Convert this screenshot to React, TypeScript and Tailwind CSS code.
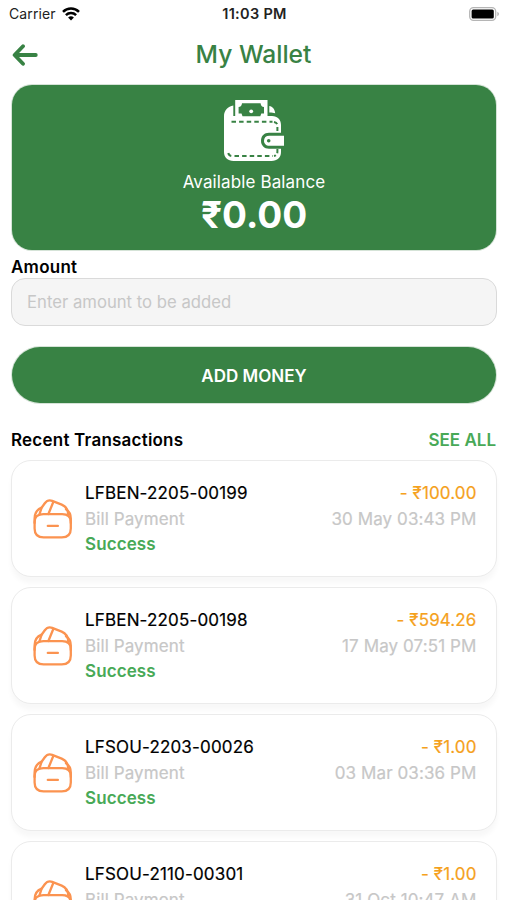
type Transaction = {
  id: string;
  amount: string;
  date: string;
};

const transactions: Transaction[] = [
  { id: "LFBEN-2205-00199", amount: "- ₹100.00", date: "30 May 03:43 PM" },
  { id: "LFBEN-2205-00198", amount: "- ₹594.26", date: "17 May 07:51 PM" },
  { id: "LFSOU-2203-00026", amount: "- ₹1.00", date: "03 Mar 03:36 PM" },
  { id: "LFSOU-2110-00301", amount: "- ₹1.00", date: "31 Oct 10:47 AM" },
];

function WifiIcon() {
  return (
    <svg width="18" height="14" viewBox="0 0 18 14" fill="none" stroke="#000" strokeWidth="2.5">
      <path d="M1 4.9a11.4 11.4 0 0 1 16 0" />
      <path d="M3.9 8.2a7.3 7.3 0 0 1 10.2 0" />
      <path d="M9 13.6 6.1 10.6a4.200 4.200 0 0 1 5.800 0z" fill="#000" stroke="none" />
    </svg>
  );
}

function BatteryIcon() {
  return (
    <svg width="31" height="14" viewBox="0 0 31 14">
      <rect x="0.7" y="0.7" width="26" height="12.6" rx="3.8" fill="#fff" stroke="#b5b5b5" strokeWidth="1.3" />
      <rect x="2.6" y="2.5" width="22.2" height="9" rx="1.5" fill="#000" />
      <path d="M28.3 4.8c2.2.8 2.2 3.6 0 4.4z" fill="#b5b5b5" />
    </svg>
  );
}

function StatusBar() {
  return (
    <div className="grid h-[27px] grid-cols-3 items-center pl-[9px] pr-[7px] text-[14px] text-[#222]">
      <div className="flex items-center gap-[6px]">
        <span className="tracking-[0.1px]">Carrier</span>
        <WifiIcon />
      </div>
      <span className="text-center text-[14.5px] font-semibold tracking-[0.3px]">11:03 PM</span>
      <div className="flex justify-end">
        <BatteryIcon />
      </div>
    </div>
  );
}

function Header() {
  return (
    <header className="grid h-[58px] grid-cols-[40px_1fr_40px] items-center px-[12px] pb-[3px]">
      <svg width="26" height="22" viewBox="0 0 26 22" fill="none" stroke="#388244" strokeWidth="3.800" strokeLinecap="round" strokeLinejoin="round">
        <path d="M11 2.200 2.600 11l8.400 8.800M3.400 11h20.400" />
      </svg>
      <h1 className="text-center text-[24.6px] font-medium text-[#388244]">My Wallet</h1>
    </header>
  );
}

function WalletIcon() {
  return (
    <svg width="60" height="63" viewBox="0 0 60 63">
      <path d="M9.300 6.500C4 7.500 0 11.500 0 17v36c0 5.500 3.800 9 9.500 9h38c5.800 0 9.500-3.500 9.500-9V26c0-5.500-3.500-9-9-9H9.300z" fill="#fff" />
      <path d="M45.300 7c3.300.5 5.500 3.200 5.900 7.300-1.600-.6-3.300-.8-5.900-.8z" fill="#fff" />
      <path d="M11.200 1h32.300v17H11.200z" fill="#fff" />
      <path d="M18 4.200h18.600c.2 2.300 1.300 3.700 3.400 3.900v6.400h-2.700l-1 2.800H18.500l-1-2.800h-2.900V8.100c2.100-.2 3.200-1.600 3.400-3.900z" fill="#388244" />
      <circle cx="27.200" cy="12.300" r="1.900" fill="#fff" />
      <path d="M7.500 22.700h41" stroke="#388244" strokeWidth="2" strokeDasharray="4.500 3.100" />
      <path d="M50 22.900c2.300.5 3.400 1.700 3.400 4v8M53.400 50v2.500c0 2.600-1 4-3.400 4.500" fill="none" stroke="#388244" strokeWidth="2" strokeDasharray="4 2.700" />
      <path d="M4.300 54c.4 1.900 1.500 2.800 3.700 3h41" fill="none" stroke="#388244" strokeWidth="2" strokeDasharray="4.500 3.100" />
      <path d="M60 33.800H45c-4.900 0-8 3.200-8 7.900s3.100 8 8 8h15z" fill="#388244" />
      <path d="M60 36.800H45.400c-3.500 0-5.400 2-5.400 4.900s1.900 5 5.400 5H60z" fill="#fff" />
      <circle cx="44.700" cy="41.700" r="1.800" fill="#388244" />
    </svg>
  );
}

function BalanceCard() {
  return (
    <section className="mx-px flex h-[165px] flex-col items-center rounded-[20px] bg-[#388244] pt-[14px] text-white ring-1 ring-[#d5e3d7]">
      <WalletIcon />
      <p className="mt-[8px] text-[17px] leading-[24px] tracking-[0.12px]">Available Balance</p>
      <p className="text-[37px] font-bold leading-[42px]">₹0.00</p>
    </section>
  );
}

function TransactionIcon() {
  return (
    <svg width="40" height="40" viewBox="0 0 40 40" fill="none" stroke="#fb9350" strokeWidth="2.300" strokeLinecap="round" strokeLinejoin="round">
      <path d="M10.500 15.200h18.600c6 0 8.700 2.700 8.700 7.800v6.500c0 6-3 8.900-9 8.900H10.600c-6 0-9-2.900-9-8.900V23c0-5.100 2.800-7.800 8.900-7.800z" />
      <path d="M1.600 24v-4.500c0-5.200 2.200-9 7-10.800M37.800 24v-4.500c0-4-1.700-7.300-4.800-9.300" />
      <path d="M6.300 15.800 8.600 8.700 11.800 4.300c2-2.700 4.400-3.500 7.400-2.400l9.500 3.700c4.300 1.800 6.300 4.600 6.600 9.900M15.400 15l5-12.200" />
      <path d="M14.800 26.900h10.100" />
    </svg>
  );
}

function TransactionCard({ transaction }: { transaction: Transaction }) {
  return (
    <li className="flex h-[117px] shrink-0 items-center rounded-[20px] border border-[#ebebeb] bg-white pl-[21px] pr-[19.5px] shadow-[0_6px_5px_rgba(0,0,0,0.03)]">
      <TransactionIcon />
      <div className="ml-[12px] flex-1 pt-[2px] text-[17px] leading-[25.700px]">
        <div className="flex justify-between">
          <span className="tracking-[0.16px] text-black [-webkit-text-stroke:0.2px]">{transaction.id}</span>
          <span className="tracking-[0.12px] text-[#f5a11c] [-webkit-text-stroke:0.2px]">{transaction.amount}</span>
        </div>
        <div className="flex justify-between tracking-[0.1px] text-[#c7c7c7] [-webkit-text-stroke:0.2px]">
          <span>Bill Payment</span>
          <span>{transaction.date}</span>
        </div>
        <p className="font-semibold tracking-[0.1px] text-[#48a957]">Success</p>
      </div>
    </li>
  );
}

function App() {
  return (
    <div className="h-[900px] w-full overflow-hidden bg-white font-['Inter','Liberation_Sans',sans-serif]">
      <StatusBar />
      <Header />
      <main className="flex flex-col pl-[11px] pr-[10px]">
        <BalanceCard />
        <label htmlFor="amount" className="mt-[6px] text-[17px] font-semibold leading-[22px] tracking-[0.25px] text-black">
          Amount
        </label>
        <input
          id="amount"
          placeholder="Enter amount to be added"
          className="h-[48px] rounded-[14px] border border-[#dadada] bg-[#f5f5f5] px-[15px] text-[16.7px] placeholder:text-[#c7c7c7]"
        />
        <button className="mx-px mt-[21px] h-[56px] rounded-full bg-[#388244] pt-[3px] text-[17px] font-semibold text-white ring-1 ring-[#d5e3d7]">
          ADD MONEY
        </button>
        <div className="mt-[25px] flex justify-between pr-px text-[17px] font-semibold leading-[24px]">
          <h2 className="tracking-[0.22px] text-black">Recent Transactions</h2>
          <span className="text-[#48a957]">SEE ALL</span>
        </div>
        <ul className="mt-[8px] flex flex-col gap-[10px]">
          {transactions.map((transaction) => (
            <TransactionCard key={transaction.id} transaction={transaction} />
          ))}
        </ul>
      </main>
    </div>
  );
}

export default App;
